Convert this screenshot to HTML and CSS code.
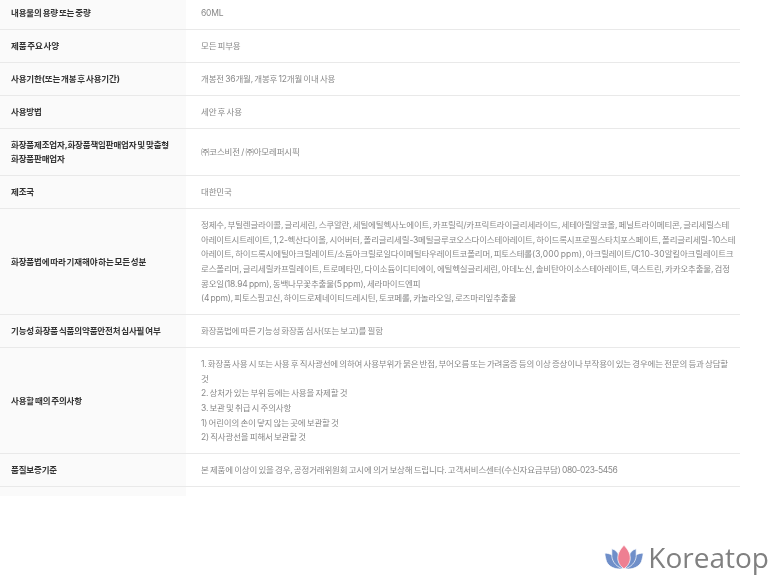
FILE: index.html
```html
<!DOCTYPE html>
<html lang="ko">
<head>
<meta charset="utf-8">
<title>Koreatop</title>
<link rel="stylesheet" href="styles.css">
</head>
<body>
<main class="sheet">
<table class="info">
<tbody>
<tr class="first"><th>내용물의 용량 또는 중량</th><td>60ML</td></tr>
<tr><th>제품 주요 사양</th><td>모든 피부용</td></tr>
<tr><th>사용기한(또는 개봉 후 사용기간)</th><td>개봉전 36개월, 개봉후 12개월 이내 사용</td></tr>
<tr><th>사용방법</th><td>세안 후 사용</td></tr>
<tr><th>화장품제조업자,화장품책임판매업자 및 맞춤형<br>화장품판매업자</th><td>㈜코스비전 / ㈜아모레퍼시픽</td></tr>
<tr><th>제조국</th><td>대한민국</td></tr>
<tr><th>화장품법에 따라 기재해야 하는 모든 성분</th><td>정제수, 부틸렌글라이콜, 글리세린, 스쿠알란, 세틸에틸헥사노에이트, 카프릴릭/카프릭트라이글리세라이드, 세테아릴알코올, 페닐트라이메티콘, 글리세릴스테아레이트시트레이트, 1,2-헥산다이올, 시어버터, 폴리글리세릴-3메틸글루코오스다이스테아레이트, 하이드록시프로필스타치포스페이트, 폴리글리세릴-10스테아레이트, 하이드록시에틸아크릴레이트/소듐아크릴로일다이메틸타우레이트코폴리머, 피토스테롤<span class="wide">(3,000 ppm)</span>, 아크릴레이트/<span class="wide">C10-30</span>알킬아크릴레이트크로스폴리머, 글리세릴카프릴레이트, 트로메타민, 다이소듐이디티에이, 에틸헥실글리세린, 아데노신, 솔비탄아이소스테아레이트, 덱스트린, 카카오추출물, 검정콩오일(18.94 ppm), 동백나무꽃추출물(5 ppm), 세라마이드엔피<br>(4 ppm), 피토스핑고신, 하이드로제네이티드레시틴, 토코페롤, 카놀라오일, 로즈마리잎추출물</td></tr>
<tr><th>기능성 화장품 식품의약품안전처 심사필 여부</th><td>화장품법에 따른 기능성 화장품 심사(또는 보고)를 필함</td></tr>
<tr><th>사용할 때의 주의사항</th><td>1. 화장품 사용 시 또는 사용 후 직사광선에 의하여 사용부위가 붉은 반점, 부어오름 또는 가려움증 등의 이상 증상이나 부작용이 있는 경우에는 전문의 등과 상담할 것<br>2. 상처가 있는 부위 등에는 사용을 자제할 것<br>3. 보관 및 취급 시 주의사항<br>1) 어린이의 손이 닿지 않는 곳에 보관할 것<br>2) 직사광선을 피해서 보관할 것</td></tr>
<tr><th>품질보증기준</th><td>본 제품에 이상이 있을 경우, 공정거래위원회 고시에 의거 보상해 드립니다. 고객서비스센터(수신자요금부담) <span class="tight">080-023-5456</span></td></tr>
</tbody>
</table>
<div class="tail"></div>
</main>
<div class="brand">
<svg class="lotus" viewBox="0 0 46 30" width="40" height="27" aria-hidden="true">
<path class="petal-blue" d="M1 10 C7 10 12 13 15 18 C17 22 19 26 21 28 C13 29 6 26 3 20 C2 16 1 13 1 10Z"/>
<path class="petal-blue" d="M45 10 C39 10 34 13 31 18 C29 22 27 26 25 28 C33 29 40 26 43 20 C44 16 45 13 45 10Z"/>
<path class="petal-blue" d="M9 5 C13 6 16 9 17 13 C18 18 20 24 22 28 C15 26 10 21 9 14 C9 11 9 8 9 5Z"/>
<path class="petal-blue" d="M37 5 C33 6 30 9 29 13 C28 18 26 24 24 28 C31 26 36 21 37 14 C37 11 37 8 37 5Z"/>
<path class="petal-pink" d="M23 1 C28 6 31 12 30 18 C29 23 26 26 23 28 C20 26 17 23 16 18 C15 12 18 6 23 1Z"/>
</svg>
<span class="brand-name">Koreatop</span>
</div>
</body>
</html>
```
FILE: styles.css
```css
* { box-sizing: border-box; }
html, body { margin: 0; padding: 0; background: #fff; }
body { height: 583px; overflow: hidden; position: relative; font-family: "Inter", "Noto Sans CJK KR", "Noto Sans", sans-serif; }
.sheet { width: 740px; filter: blur(0.35px); }
.info { width: 740px; border-collapse: separate; border-spacing: 0; table-layout: fixed; font-size: 8.5px; line-height: 14.67px; word-spacing: -0.9px; }
.info th, .info td { height: 33px; border-bottom: 1px solid #e9e9e9; vertical-align: middle; padding: 8.5px 0; }
.info th { width: 186px; padding-left: 11px; padding-right: 4px; background: #fafafa; color: #333; font-weight: 700; text-align: left; letter-spacing: -0.15px; }
.info td { padding-left: 15px; padding-right: 4px; color: #888; font-weight: 400; word-break: break-all; letter-spacing: -0.18px; }
.info .first th, .info .first td { height: 30px; padding-top: 3px; padding-bottom: 6px; }
.wide { letter-spacing: 0.12px; }
.tight { letter-spacing: -0.45px; }
.tail { width: 186px; height: 9px; background: #fafafa; }
.brand { position: absolute; right: 10px; bottom: 9px; display: flex; align-items: center; gap: 4px; filter: blur(0.4px); }
.lotus { display: block; }
.petal-blue { fill: #6f8fc9; stroke: #fff; stroke-width: .8; }
.petal-pink { fill: #ee7f92; stroke: #fff; stroke-width: .8; }
.brand-name { font-family: "Open Sans", sans-serif; font-size: 28px; line-height: 34px; color: #808080; font-weight: 400; }
```
